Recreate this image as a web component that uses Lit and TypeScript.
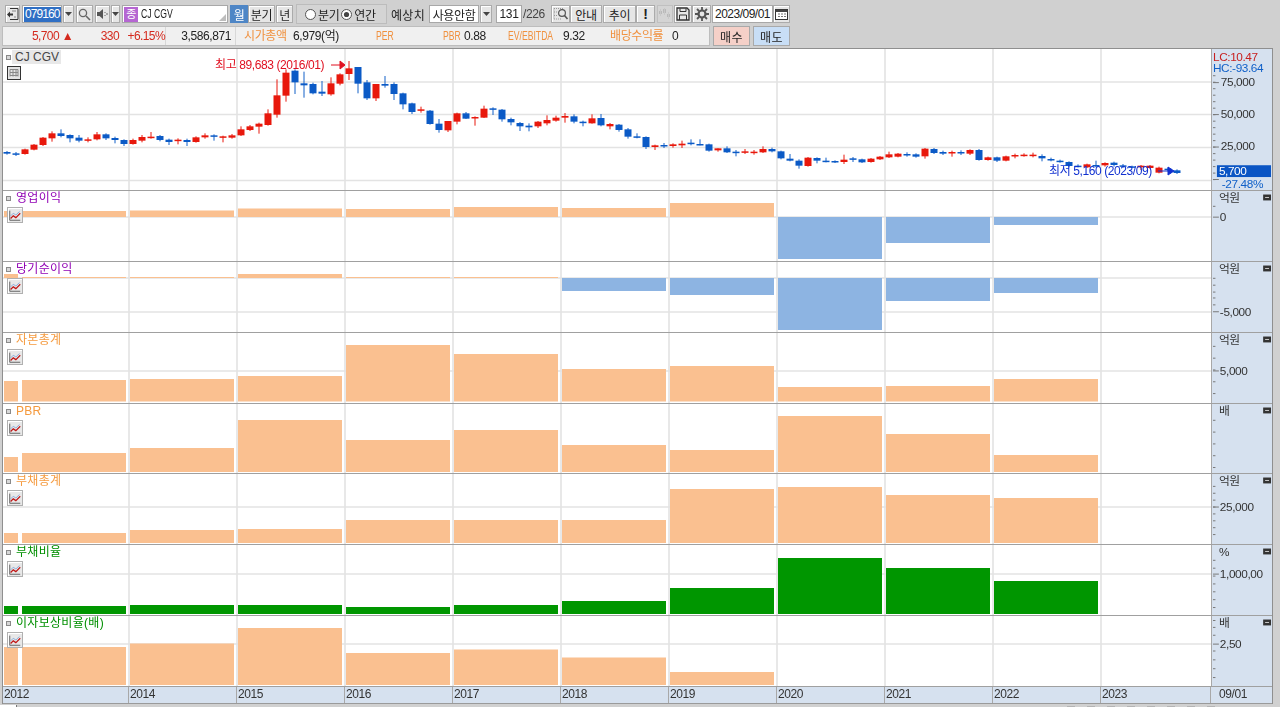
import { LitElement, html, css, svg } from "lit";
import { customElement } from "lit/decorators.js";

type Candle = [number, number, number, number, number];
const C: Candle[] = [
[306,311,303,314,0],[310,312,306,318,0],[298,312,296,314,1],[284,299,282,301,1],[263,285,261,288,1],[250,265,244,275,1],[250,258,238,262,0],[255,265,253,277,0],[263,272,255,277,0],[268,271,262,277,1],
[253,268,246,271,1],[253,265,250,270,0],[264,270,260,280,0],[270,282,268,288,0],[270,282,266,284,1],[261,272,255,277,1],[260,263,246,266,1],[258,270,255,274,0],[269,276,266,285,0],[269,272,265,283,1],
[270,276,266,288,0],[262,276,259,278,1],[256,262,250,266,1],[256,259,253,272,0],[259,261,257,277,1],[256,263,252,266,1],[238,256,229,258,1],[229,240,225,243,1],[221,230,218,251,1],[190,225,178,227,1],
[136,194,88,203,1],[68,137,58,155,1],[62,97,58,132,0],[100,106,65,143,0],[102,130,98,133,0],[125,131,93,138,0],[100,133,82,137,1],[73,101,70,106,1],[55,72,33,90,1],[51,101,51,130,0],
[97,145,90,150,0],[102,145,102,153,1],[102,107,78,113,0],[102,132,97,150,0],[130,163,128,178,0],[160,186,158,192,0],[178,182,170,188,1],[182,222,180,224,0],[221,240,207,248,0],[213,241,213,246,1],
[190,215,188,223,1],[190,206,186,207,0],[201,205,199,227,1],[176,203,167,204,1],[175,179,172,195,0],[179,208,177,215,0],[207,217,203,226,0],[219,229,216,243,0],[227,232,220,244,0],[215,229,213,234,1],
[210,220,196,226,1],[203,212,197,215,1],[198,203,189,218,1],[199,215,193,220,0],[215,219,212,229,0],[205,220,193,221,1],[204,226,192,229,0],[222,229,219,238,1],[224,240,222,245,0],[238,260,234,266,0],
[259,263,250,265,0],[261,291,259,297,0],[286,291,284,300,1],[285,288,279,294,0],[283,288,280,293,1],[281,286,272,294,1],[278,282,268,286,0],[282,284,268,286,0],[283,302,281,305,0],[295,301,295,305,1],
[295,307,289,309,0],[305,307,300,319,0],[304,307,297,312,1],[305,307,300,314,1],[297,307,289,309,1],[297,304,293,307,0],[304,325,302,328,0],[326,332,312,334,0],[332,347,328,356,0],[323,348,321,350,1],
[324,332,322,340,0],[332,335,323,337,0],[333,336,331,339,0],[329,336,314,342,1],[325,328,321,336,0],[328,337,326,339,0],[326,336,324,338,1],[320,328,318,330,1],[313,322,305,324,1],[311,320,309,322,1],
[312,315,307,320,0],[313,320,310,323,0],[296,319,294,326,1],[297,309,294,312,0],[306,311,302,315,0],[306,310,302,320,1],[306,310,301,315,0],[300,311,298,315,1],[300,330,297,332,0],[322,330,320,332,1],
[322,332,320,336,0],[319,332,317,334,1],[315,319,311,325,1],[314,317,310,320,1],[314,317,308,322,1],[318,325,313,334,0],[327,331,323,334,0],[332,335,329,338,0],[336,348,334,352,0],[347,350,343,352,0],
[343,352,341,354,1],[345,348,332,352,0],[339,346,337,350,1],[338,345,335,350,0],[346,350,342,354,0],[349,352,347,354,0],[347,352,345,360,1],[347,354,345,356,1],[353,368,350,370,1],[356,360,353,364,0],[361,369,358,372,0],
];

const VX = [129, 237, 345, 453, 561, 669, 777, 885, 993, 1101];

interface Panel {
  name: string; tone: string; top: number; bottom: number; unit: string;
  base: number; fill: string; vals: (number | null)[];
  labels: [number, string][]; grid: number[]; ticks: number[];
}
const range = (a: number, b: number, s: number) => { const r: number[] = []; for (let v = a; v <= b; v += s) r.push(v); return r; };

const PANELS: Panel[] = [
  { name: "영업이익", tone: "purple", top: 191, bottom: 261, unit: "억원", base: 217, fill: "orange",
    vals: [211,211,210.5,208.5,209,207,208,203,259,243,225], labels: [[217,"0"]], grid: [217], ticks: [206] },
  { name: "당기순이익", tone: "purple", top: 262, bottom: 332, unit: "억원", base: 278, fill: "orange",
    vals: [274,277,277,274,277,277,291,295,330,301,293], labels: [[312,"-5,000"]], grid: [278,312], ticks: [278,285,292,298,305] },
  { name: "자본총계", tone: "orange", top: 333, bottom: 403, unit: "억원", base: 401.5, fill: "orange",
    vals: [381,380,379,376,345,354,369,366,387,386,379], labels: [[371,"5,000"]], grid: [371], ticks: range(346,396,12) },
  { name: "PBR", tone: "orange", top: 404, bottom: 473, unit: "배", base: 472, fill: "orange",
    vals: [457,453,448,420,440,430,445,450,416,434,455], labels: [], grid: [], ticks: range(420,468,12) },
  { name: "부채총계", tone: "orange", top: 474, bottom: 544, unit: "억원", base: 543, fill: "orange",
    vals: [533,533,530,529,520,520,520,489,487,495,498], labels: [[507,"25,000"]], grid: [507], ticks: range(486,536,7) },
  { name: "부채비율", tone: "green", top: 545, bottom: 615, unit: "%", base: 614, fill: "green",
    vals: [606,606,605,605,607,605,601,588,558,568,581], labels: [[574,"1,000,00"]], grid: [574], ticks: range(560,610,8) },
  { name: "이자보상비율(배)", tone: "green", top: 616, bottom: 686, unit: "배", base: 685, fill: "orange",
    vals: [647,647,643.5,628,653,649.5,657.5,672,null,null,null], labels: [[644,"2,50"]], grid: [644], ticks: [620,627,635,651,660,669,678] },
];

const YEARS = ["2012","2014","2015","2016","2017","2018","2019","2020","2021","2022","2023"];

const lineIcon = html`<svg class="lineicon" viewBox="0 0 16 16"><path class="ic-axis" d="M2 3v11h12"/><path class="ic-b" d="M3 9l3-3 3 2 4-4"/><path class="ic-r" d="M3 12l3-3 3 2 5-5"/></svg>`;

const candlesSvg = () => C.map((c, i) => {
  const x = 7 + 9 * i;
  const y = (v: number) => 50 + v / 3;
  const cls = c[4] ? "red" : "blue";
  const h = Math.max(1.5, y(c[1]) - y(c[0]));
  return svg`<line class="wick ${cls}" x1=${x} x2=${x} y1=${y(c[2])} y2=${y(c[3])}/><rect class="${cls}-fill" x=${x - 3.5} y=${y(c[0])} width="7" height=${h}/>`;
});

const vgrid = (top: number, bottom: number) => VX.map(x => svg`<line class="grid" x1=${x} x2=${x} y1=${top} y2=${bottom}/>`);
const hgrid = (ys: number[]) => ys.map(y => svg`<line class="grid" x1="3" x2="1211" y1=${y} y2=${y}/>`);
const ticks = (major: number[], minor: number[]) => svg`
  ${major.map(y => svg`<line class="tick" x1="1212" x2="1218" y1=${y} y2=${y}/>`)}
  ${minor.map(y => svg`<line class="tick" x1="1212" x2="1214.5" y1=${y} y2=${y}/>`)}`;

/* vals[0] is the cut-off bar at the left edge, the rest fill the year slots. */
const bars = (p: Panel) => p.vals.map((v, i) => {
  if (v === null) return null;
  const x = i === 0 ? 4 : 22 + 108 * (i - 1);
  const w = i === 0 ? 14 : 104;
  const cls = v > p.base ? "bar-blue" : p.fill === "green" ? "bar-green" : "bar-orange";
  return svg`<rect class=${cls} x=${x} y=${Math.min(v, p.base)} width=${w} height=${Math.abs(v - p.base)}/>`;
});

@customElement("app-root")
export class AppRoot extends LitElement {
  static styles = css`
    :host { display: block; width: 1280px; height: 707px; overflow: hidden; background: #d0d0d0;
      font: 12px "Liberation Sans", "Noto Sans CJK KR", sans-serif; letter-spacing: -.4px; color: #222; }
    .page { filter: blur(.35px); height: 707px; display: flex; flex-direction: column; }
    .toolbar { display: flex; align-items: stretch; height: 18px; padding: 5px 0 0 5px; }
    .btn { display: flex; align-items: center; justify-content: center; box-sizing: border-box; height: 18px;
      background: #e6e6e6; border: 1px solid #ababab; box-shadow: inset 1px 1px 0 #fff; white-space: nowrap; }
    .btn svg { display: block; }
    .flat { background: #d4d4d4; border-color: #c0c0c0; box-shadow: none; }
    .field { display: flex; align-items: center; box-sizing: border-box; height: 18px; background: #fff; border: 1px solid #a8a8a8; white-space: nowrap; }
    .w9{width:9px}.w11{width:11px}.w12{width:12px}.w15{width:15px}.w16{width:16px}.w17{width:17px}.w18{width:18px}.w19{width:19px}
    .w26{width:26px}.w27{width:27px}.w32{width:32px}.w33{width:33px}.w40{width:40px}.w50{width:50px}.w61{width:61px}.w106{width:106px}
    .ml1{margin-left:1px}.ml2{margin-left:2px}.ml3{margin-left:3px}.ml4{margin-left:4px}.ml6{margin-left:6px}
    .code { padding: 0 1px; }
    .code span { background: #2f6fc4; color: #fff; padding: 1px; line-height: 13px; letter-spacing: -.9px; }
    .name { position: relative; padding-left: 1px; gap: 3px; }
    .jong { width: 14px; height: 15px; background: #b566d2; color: #fff; text-align: center; line-height: 15px; font-size: 11px; }
    .grip { position: absolute; right: 1px; bottom: 1px; width: 0; height: 0; border-left: 7px solid transparent; border-bottom: 7px solid #bdbdbd; }
    .narrow { display: inline-block; letter-spacing: 0; transform: scaleX(.72); transform-origin: left center; white-space: nowrap; }
    .active { background: #4e86c6; color: #fff; border-color: #4e86c6; box-shadow: none; }
    .radios { display: flex; align-items: center; gap: 2px; box-sizing: border-box; width: 91px; height: 20px; margin-top: -1px; padding-left: 8px;
      background: #d4d4d4; border: 1px solid #bcbcbc; }
    .caption { width: 34px; display: flex; align-items: center; white-space: nowrap; letter-spacing: .3px; }
    .count { justify-content: center; }
    .total { width: 22px; display: flex; align-items: center; color: #444; }
    .date { justify-content: center; letter-spacing: -.5px; }
    .mark { font-weight: 700; font-size: 14px; }
    .info { display: flex; height: 20px; margin: 3px 0 0 2px; }
    .panelbar { display: flex; width: 708px; box-sizing: border-box; height: 20px; background: #f0f0f0; border: 1px solid #bdbdbd; align-items: center; line-height: 18px; }
    .a { width: 163px; display: grid; grid-template-columns: 70px 46px 46px; text-align: right; color: #d42a1e; border-right: 1px solid #d8d8d8; box-sizing: border-box; letter-spacing: -.6px; }
    .b { width: 70px; padding-right: 4px; box-sizing: border-box; text-align: right; border-right: 1px solid #d8d8d8; }
    .c { display: grid; grid-template-columns: 49px 83px 67px 21px 44px 55px 47px 62px auto; padding-left: 8px; white-space: nowrap; }
    .tag { color: #f0913f; }
    .trade { display: flex; align-items: center; justify-content: center; box-sizing: border-box; width: 37px; height: 20px; border: 1px solid #a9a9a9; letter-spacing: .4px; }
    .buy { background: #f5d0c8; margin-left: 3px; }
    .sell { background: #c8def6; margin-left: 3px; }
    .chart { margin: 2px 0 0 2px; width: 1271px; border: 1px solid #8f8f8f; border-bottom: 0; box-sizing: border-box; flex: none; }
    .row { display: flex; border-bottom: 1px solid #a0a0a0; box-sizing: border-box; }
    .plot { position: relative; width: 1208px; background: #fff; flex: none; }
    .axis { width: 61px; background: #d6e1ef; border-left: 1px solid #a8a8a8; flex: none; box-sizing: border-box; position: relative; }
    svg.fill { display: block; width: 100%; height: 100%; }
    .grid { stroke: #e3e3e3; stroke-width: 1.6; }
    .wick { stroke-width: 1; }
    .wick.red { stroke: #e8180c; } .wick.blue { stroke: #1360c8; }
    .red-fill { fill: #e8180c; } .blue-fill { fill: #0b5ac6; }
    .bar-orange { fill: #fac090; } .bar-blue { fill: #8db4e2; } .bar-green { fill: #009600; }
    .tick { stroke: #777; stroke-width: 1; }
    text { font: 12px "Liberation Sans", "Noto Sans CJK KR", sans-serif; letter-spacing: -.4px; fill: #333; }
    .t-red { fill: #e01020; } .t-blue { fill: #1030d0; } .t-lc { fill: #c82020; } .t-hc { fill: #1060c8; }
    .t-white { fill: #fff; } .pricebox { fill: #0b55c4; }
    .arrow-r { stroke: #e01020; fill: #e01020; } .arrow-b { stroke: #1030d0; fill: #1030d0; }
    .legend { position: absolute; left: 3px; top: 0; display: flex; align-items: center; gap: 5px; line-height: 14px; white-space: nowrap; letter-spacing: .3px; }
    .dot { width: 3px; height: 3px; border: 1px solid #8a8a8a; background: #d8d8d8; }
    .purple { color: #9000b4; } .orange { color: #f59a3e; } .green { color: #008f00; }
    .stock { background: #e8e8e8; margin-left: -4px; padding: 0 2px 0 3px; letter-spacing: 0; line-height: 14px; color: #444; }
    .main .legend { top: 1px; }
    .lineicon { position: absolute; left: 4px; top: 16px; width: 16px; height: 16px; box-sizing: border-box; background: #e8e8e8; border: 1px solid #b0b0b0; box-shadow: inset 1px 1px 0 #fff; }
    .ic-axis { fill: none; stroke: #555; stroke-width: 1; } .ic-b { fill: none; stroke: #7fa6d8; stroke-width: 1; } .ic-r { fill: none; stroke: #c01818; stroke-width: 1.4; }
    .tableicon { position: absolute; left: 4px; top: 17px; width: 14px; height: 14px; display: block; }
    .time { display: grid; grid-template-columns: 126px repeat(9, 108px) 110px 61px; height: 16px; background: #d6e1ef; border-bottom: 1px solid #9a9a9a; line-height: 15px; color: #333; }
    .time span { padding-left: 1px; border-right: 1px solid #a8a8a8; box-sizing: border-box; }
    .time span:last-child { padding-left: 8px; border-right: 0; }
    .foot { display: flex; height: 3px; padding-top: 1px; overflow: hidden; }
    .foot i { display: block; width: 16px; background: #fff; border-right: 1px solid #777; }
    .foot .tabs { display: flex; gap: 12px; margin-left: 1050px; }
    .foot b { display: block; width: 8px; height: 3px; margin-top: 1px; background: #b4b4b4; }
  `;

  private icon(kind: string) {
    switch (kind) {
      case "doc": return html`<svg width="13" height="14" viewBox="0 0 13 14"><path d="M4 1.5h8v11H4" fill="none" stroke="#333"/><path d="M1 7.5l3-3v2h3v2H4v2z" fill="#333"/><path d="M6 4h4M8 10h2" stroke="#888"/></svg>`;
      case "tri": return html`<svg width="7" height="4" viewBox="0 0 7 4"><path d="M0 0h7L3.5 4z" fill="#444"/></svg>`;
      case "search": return html`<svg width="13" height="13" viewBox="0 0 13 13"><circle cx="5" cy="5" r="3.6" fill="none" stroke="#666" stroke-width="1.3"/><path d="M8 8l4 4" stroke="#666" stroke-width="1.6"/></svg>`;
      case "speaker": return html`<svg width="12" height="12" viewBox="0 0 12 12"><path d="M0 4h2.5L6 1v10L2.5 8H0z" fill="#555"/><path d="M8 4v1M8 7v1M10 5v2" stroke="#666"/></svg>`;
      case "find": return html`<svg width="16" height="14" viewBox="0 0 16 14"><path d="M1 1.5h9M1 5h3M1 8.5h3M1 12h8M1 1.5V12" stroke="#999" stroke-dasharray="1 1" fill="none"/><circle cx="9" cy="6" r="3.4" fill="none" stroke="#555" stroke-width="1.2"/><path d="M11.5 8.5l3 3.5" stroke="#555" stroke-width="1.6"/></svg>`;
      case "dots": return html`<svg width="14" height="12" viewBox="0 0 14 12"><path d="M1 3h3v3H1zM5 1h3v4H5zM9 6h3v3H9z" fill="#b9b9b9"/><path d="M2.5 1v7M6.5 0v7M10.5 4v7" stroke="#c8c8c8"/></svg>`;
      case "save": return html`<svg width="14" height="14" viewBox="0 0 14 14"><path d="M1 1h10l2 2v10H1z" fill="none" stroke="#333" stroke-width="1.3"/><path d="M4 1.5v3h6v-3M3.5 13V8h7v5" fill="none" stroke="#333"/></svg>`;
      case "gear": return html`<svg width="14" height="14" viewBox="0 0 14 14"><circle cx="7" cy="7" r="3.5" fill="none" stroke="#555" stroke-width="2.2"/><path d="M7 0v3M7 11v3M0 7h3M11 7h3M2 2l2 2M10 10l2 2M12 2l-2 2M4 10l-2 2" stroke="#555" stroke-width="1.8"/></svg>`;
      case "cal": return html`<svg width="13" height="12" viewBox="0 0 13 12"><rect x=".5" y="1.5" width="12" height="10" fill="#fff" stroke="#333"/><path d="M.5 1.5h12V4H.5z" fill="#444"/><path d="M3 6h2M6 6h2M9 6h2M3 8.5h2M6 8.5h2M9 8.5h2" stroke="#777"/></svg>`;
    }
    return null;
  }

  private radio(on: boolean) {
    return html`<svg width="11" height="11" viewBox="0 0 11 11"><circle cx="5.5" cy="5.5" r="5" fill="#fff" stroke="#555"/>${on ? svg`<circle cx="5.5" cy="5.5" r="2.6" fill="#444"/>` : null}</svg>`;
  }

  private mainPanel() {
    return html`<div class="row main">
      <div class="plot">
        <svg class="fill" viewBox="3 49 1208 141" width="1208" height="141">
          ${hgrid([82, 114.5, 147.5, 180.5])}
          ${vgrid(49, 190)}
          ${candlesSvg()}
          <text class="t-red" x="215" y="69">최고 89,683 (2016/01)</text>
          <line class="arrow-r" x1="331" x2="342" y1="65" y2="65"/><path class="arrow-r" d="M340 61l5 4-5 4z"/>
          <text class="t-blue" x="1049" y="175">최저 5,160 (2023/09)</text>
          <line class="arrow-b" x1="1158" x2="1172" y1="171" y2="171"/><path class="arrow-b" d="M1168 167l6 4-6 4z"/>
        </svg>
        <div class="legend"><span class="dot"></span><span class="stock">CJ CGV</span></div>
        <svg class="tableicon" viewBox="0 0 14 14"><rect x=".5" y=".5" width="13" height="13" fill="#e4e4e4" stroke="#333"/><path d="M3 3.5h8M3 6.5h8M3 9.5h8M3 3.5v7M6 3.5v7M9 3.5v7M11 3.5v7" stroke="#888" fill="none"/></svg>
      </div>
      <div class="axis">
        <svg class="fill" viewBox="1211 49 61 141" width="61" height="141">
          ${ticks([82, 114.5, 147.5, 180.5], range(75, 187, 6.6))}
          <text class="t-lc" x="1212" y="60">LC:10.47</text>
          <text class="t-hc" x="1212" y="71">HC:-93.64</text>
          <text x="1220" y="85">75,000</text>
          <text x="1220" y="118">50,000</text>
          <text x="1220" y="151">25,000</text>
          <rect class="pricebox" x="1216" y="166" width="55" height="12"/>
          <text class="t-white" x="1218" y="176">5,700</text>
          <text class="t-hc" x="1221" y="189">-27.48%</text>
        </svg>
      </div>
    </div>`;
  }

  private subPanel(p: Panel) {
    const h = p.bottom - p.top;
    return html`<div class="row sub">
      <div class="plot">
        <svg class="fill" viewBox="3 ${p.top} 1208 ${h}" width="1208" height=${h}>
          ${hgrid(p.grid)}
          ${vgrid(p.top, p.bottom)}
          ${bars(p)}
        </svg>
        <div class="legend ${p.tone}"><span class="dot"></span><span>${p.name}</span></div>
        ${lineIcon}
      </div>
      <div class="axis">
        <svg class="fill" viewBox="1211 ${p.top} 61 ${h}" width="61" height=${h}>
          ${ticks(p.labels.map(l => l[0]), p.ticks)}
          <text x="1218" y=${p.top + 11}>${p.unit}</text>
          <rect x="1263" y=${p.top + 3} width="8" height="6" fill="#333"/>
          <path d="M1265 ${p.top + 6}h4" stroke="#ccc"/>
          ${p.labels.map(([y, t]) => svg`<text x="1219" y=${y + 4}>${t}</text>`)}
        </svg>
      </div>
    </div>`;
  }

  render() {
    return html`<div class="page">
      <div class="toolbar">
        <div class="btn w15">${this.icon("doc")}</div>
        <div class="field code w40 ml2"><span>079160</span></div>
        <div class="btn w11 ml1">${this.icon("tri")}</div>
        <div class="btn w17 ml2">${this.icon("search")}</div>
        <div class="btn w15 ml2">${this.icon("speaker")}</div>
        <div class="btn w9 ml1">${this.icon("tri")}</div>
        <div class="field name w106 ml2"><span class="jong">종</span><span class="narrow">CJ CGV</span><i class="grip"></i></div>
        <div class="btn active w18 ml2">월</div>
        <div class="btn w27">분기</div>
        <div class="btn w17 ml1">년</div>
        <div class="radios ml3">${this.radio(false)}<span>분기</span>${this.radio(true)}<span>연간</span></div>
        <div class="caption ml4">예상치</div>
        <div class="field w50 ml4 count">사용안함</div>
        <div class="btn w12 ml1">${this.icon("tri")}</div>
        <div class="field w26 ml4 count">131</div>
        <div class="total ml1">/226</div>
        <div class="btn w19 ml6">${this.icon("find")}</div>
        <div class="btn w32">안내</div>
        <div class="btn w33 ml1">추이</div>
        <div class="btn w19 mark">!</div>
        <div class="btn flat w16 ml2">${this.icon("dots")}</div>
        <div class="btn w18 ml1">${this.icon("save")}</div>
        <div class="btn w19">${this.icon("gear")}</div>
        <div class="field w61 ml1 date">2023/09/01</div>
        <div class="btn w17">${this.icon("cal")}</div>
      </div>
      <div class="info">
        <div class="panelbar">
          <div class="a"><span>5,700 ▲</span><span>330</span><span>+6.15%</span></div>
          <div class="b">3,586,871</div>
          <div class="c">
            <span class="tag">시가총액</span><span>6,979(억)</span>
            <span class="tag narrow">PER</span><span class="tag narrow">PBR</span><span>0.88</span>
            <span class="tag narrow">EV/EBITDA</span><span>9.32</span>
            <span class="tag">배당수익률</span><span>0</span>
          </div>
        </div>
        <div class="trade buy">매수</div>
        <div class="trade sell">매도</div>
      </div>
      <div class="chart">
        ${this.mainPanel()}
        ${PANELS.map(p => this.subPanel(p))}
        <div class="time">${YEARS.map(y => html`<span>${y}</span>`)}<span>09/01</span></div>
      </div>
      <div class="foot"><i></i><div class="tabs"><b></b><b></b><b></b><b></b><b></b><b></b><b></b><b></b></div></div>
    </div>`;
  }
}
